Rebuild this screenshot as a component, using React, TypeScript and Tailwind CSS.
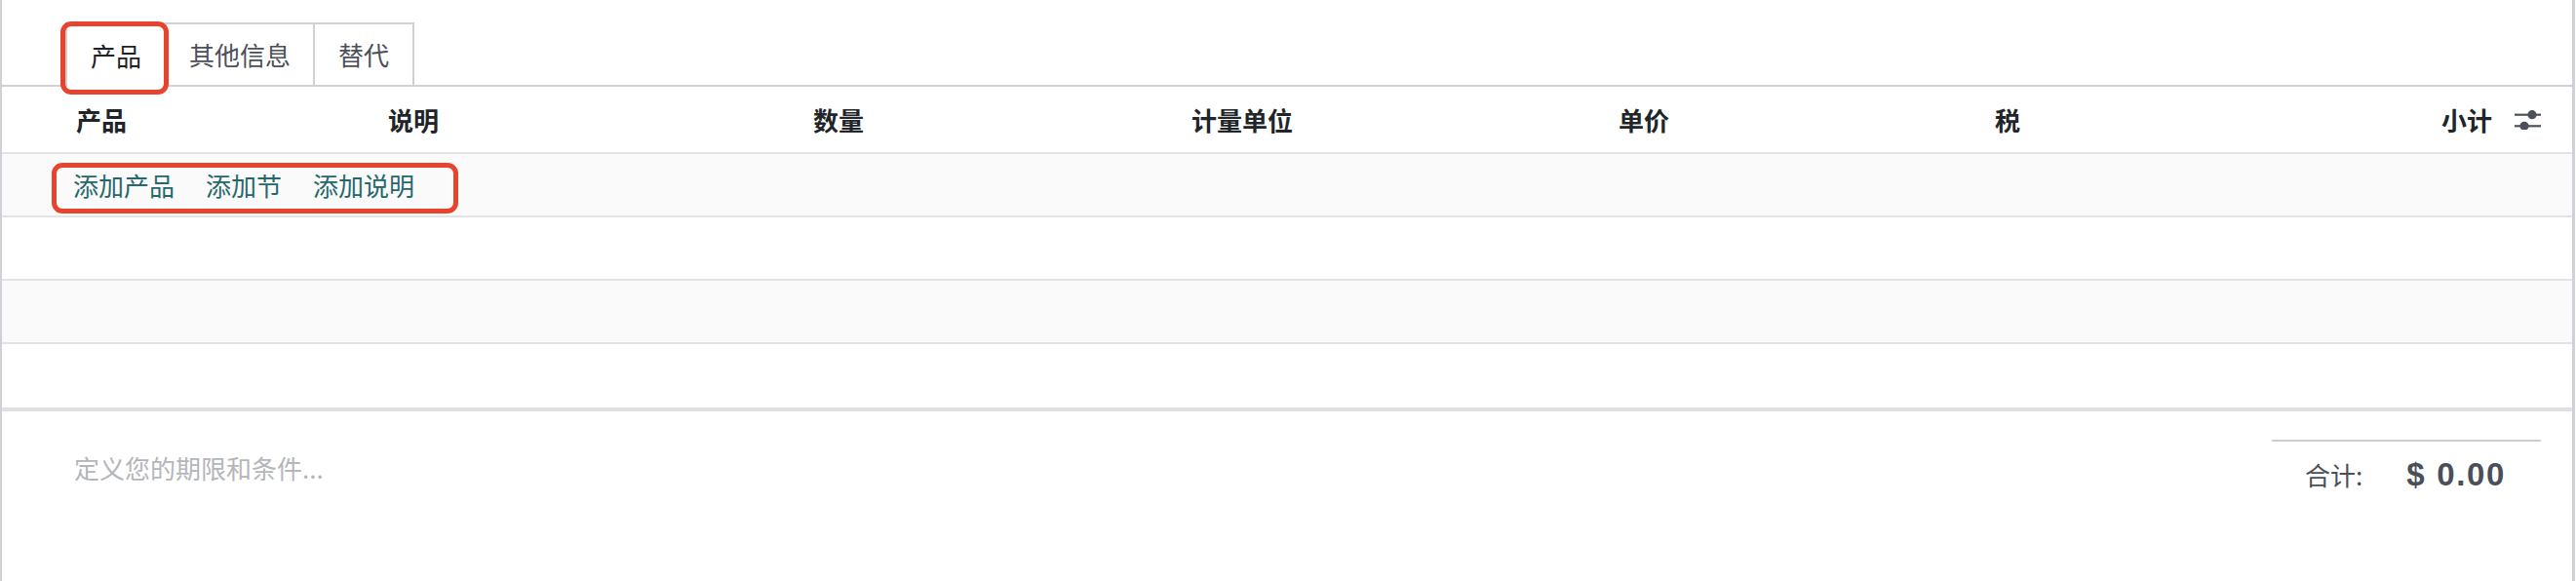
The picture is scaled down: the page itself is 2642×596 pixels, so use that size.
import React from "react";

const cjk = "font-['Noto_Sans_CJK_SC',sans-serif]";

function SlidersIcon() {
  return (
    <svg width="28" height="20" viewBox="0 0 28 20" fill="none">
      <line x1="0" y1="4.7" x2="27" y2="4.7" stroke="#4b505a" strokeWidth="2.2" />
      <circle cx="18" cy="4.7" r="4.6" fill="#4b505a" />
      <line x1="0" y1="16.3" x2="27" y2="16.3" stroke="#4b505a" strokeWidth="2.2" />
      <circle cx="10" cy="16.3" r="4.6" fill="#4b505a" />
    </svg>
  );
}

function EmptyRow({ striped, last }: { striped?: boolean; last?: boolean }) {
  return (
    <div
      className={
        last
          ? "h-[69px] border-b-4 border-[#dfe0e4] bg-white"
          : striped
          ? "h-[65px] border-b-2 border-[#e2e3e6] bg-[#fafafa]"
          : "h-[65px] border-b-2 border-[#e2e3e6] bg-white"
      }
    />
  );
}

export default function App() {
  return (
    <div className={`w-[2642px] h-[596px] bg-white ${cjk} text-[26px] leading-[36px]`}>
      <div className="relative w-[2641px] h-[596px] border-l-2 border-r-[3px] border-[#d0d1d8] flex flex-col">
        {/* Tabs */}
        <div className="pt-[23px] border-b-2 border-[#cfd1d6]">
          <div className="flex pl-[65px] -mb-[2px]">
            <div className="w-[104px] h-[66px] border-t-2 border-l-2 border-r-2 border-[#cfd1d6] bg-white flex items-center justify-center text-[#1f2328]">
              产品
            </div>
            <div className="w-[152px] h-[64px] border-t-2 border-r-2 border-[#cfd1d6] flex items-center justify-center text-[#4b505a]">
              其他信息
            </div>
            <div className="w-[102px] h-[64px] border-t-2 border-r-2 border-[#cfd1d6] flex items-center justify-center text-[#4b505a]">
              替代
            </div>
          </div>
        </div>

        {/* Header row */}
        <div className="h-[69px] border-b-2 border-[#e2e3e6] flex items-center pl-[64px] font-bold text-[#212529]">
          <div className="w-[320px] px-[12px]">产品</div>
          <div className="w-[436px] px-[12px]">说明</div>
          <div className="w-[388px] px-[12px]">数量</div>
          <div className="w-[438px] px-[12px]">计量单位</div>
          <div className="w-[386px] px-[12px]">单价</div>
          <div className="w-[266px] px-[12px]">税</div>
          <div className="w-[268px] px-[12px] text-right">小计</div>
          <div className="w-[70px] pl-[11px] flex items-center">
            <SlidersIcon />
          </div>
        </div>

        {/* Add row */}
        <div className="h-[65px] border-b-2 border-[#e2e3e6] bg-[#fafafa] flex items-center pl-[73px] gap-[32px] text-[#25686c]">
          <span>添加产品</span>
          <span>添加节</span>
          <span>添加说明</span>
        </div>

        <EmptyRow />
        <EmptyRow striped />
        <EmptyRow last />

        {/* Footer */}
        <div className="flex justify-between">
          <div className="pl-[74px] pt-[40px] text-[#b4b6ba]">定义您的期限和条件...</div>
          <div className="mr-[32px] mt-[29px] w-[276px] border-t-2 border-[#cbcdd2] pt-[16px] pr-[36px] flex justify-end items-baseline gap-[45px] text-[#4a4f59]">
            <span>合计:</span>
            <span className="font-['Liberation_Sans',sans-serif] font-bold text-[33px] tracking-[0.05em]">$ 0.00</span>
          </div>
        </div>

        {/* Annotation boxes */}
        <div className="absolute left-[60px] top-[22px] w-[111px] h-[75px] border-[5px] border-[#e8432d] rounded-[11px]" />
        <div className="absolute left-[51px] top-[167px] w-[417px] h-[52px] border-[5px] border-[#e8432d] rounded-[11px]" />
      </div>
    </div>
  );
}
